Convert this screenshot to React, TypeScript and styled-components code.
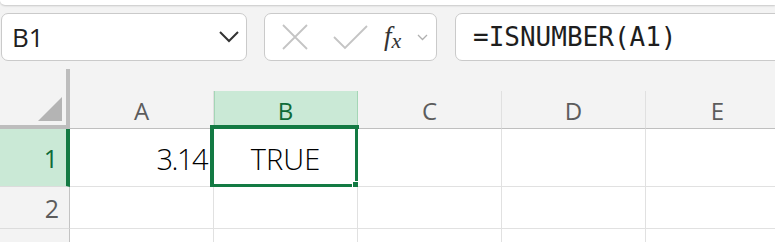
import React from "react";
import styled, { createGlobalStyle } from "styled-components";

const Global = createGlobalStyle`
  html, body { margin: 0; padding: 0; background: #f3f3f3; overflow: hidden; }
  body { width: 775px; height: 242px; font-family: "Open Sans", "Noto Sans", sans-serif; }
`;

const Page = styled.div`
  display: flex;
  flex-direction: column;
  width: 775px;
  height: 242px;
  overflow: hidden;
  & > * { flex-shrink: 0; }
`;

const RibbonEdge = styled.div`
  height: 5px;
  background: #ffffff;
  border-bottom-left-radius: 8px;
  box-shadow: 0 1px 2px rgba(0, 0, 0, 0.18);
`;

const FormulaBar = styled.div`
  display: flex;
  align-items: stretch;
  height: 48px;
  margin-top: 8px;
  padding-left: 1px;
`;

const Box = styled.div`
  box-sizing: border-box;
  display: flex;
  align-items: center;
  background: #ffffff;
  border: 1.5px solid #cacaca;
  border-radius: 7px;
`;

const NameBox = styled(Box)`
  width: 246px;
  justify-content: space-between;
  padding: 0 6px 0 10px;
  font-size: 26px;
  color: #202020;
`;

const FxBox = styled(Box)`
  width: 173px;
  margin-left: 17px;
  padding-left: 17px;
`;

const FormulaBox = styled(Box)`
  flex: 1;
  margin-left: 18px;
  margin-right: -20px;
  padding-left: 17px;
  font-family: "DejaVu Sans Mono", "Liberation Mono", monospace;
  font-size: 26px;
  color: #1e1e1e;
`;

const IconSlot = styled.span<{ $w: number }>`
  display: inline-flex;
  width: ${(p) => p.$w}px;
  align-items: center;
`;

const FxText = styled.span`
  font-family: "Liberation Serif", "DejaVu Serif", serif;
  font-style: italic;
  font-size: 27px;
  color: #333;
  line-height: 1;
  sub {
    font-size: 22px;
    vertical-align: -3px;
  }
`;

const Sheet = styled.div`
  position: relative;
  margin-top: 8px;
  display: grid;
  grid-template-columns: 70px repeat(5, 144px);
  grid-template-rows: 22px 38px 58px 42px 42px;
`;

const Corner = styled.div`
  grid-row: 1 / span 2;
  grid-column: 1;
  box-sizing: border-box;
  border-right: 4px solid #bdbdbd;
  border-bottom: 4px solid #bdbdbd;
  display: flex;
  align-items: flex-end;
  justify-content: flex-end;
  padding: 0 4px 4px 0;
`;

const TopSpacer = styled.div`
  grid-row: 1;
  grid-column: 2 / -1;
`;

const ColHeader = styled.div<{ $active?: boolean }>`
  box-sizing: border-box;
  display: flex;
  align-items: center;
  justify-content: center;
  font-size: 24px;
  color: ${(p) => (p.$active ? "#0f6b38" : "#5c5c5c")};
  background: ${(p) => (p.$active ? "#cae9d6" : "#f3f3f3")};
  border-right: 1px solid ${(p) => (p.$active ? "#a4d6b6" : "#e0e0e0")};
  border-bottom: 1px solid #bfbfbf;
  box-shadow: ${(p) => (p.$active ? "inset 1px 0 0 #a4d6b6" : "none")};
  padding-top: 1px;
`;

const RowHeader = styled.div<{ $active?: boolean }>`
  box-sizing: border-box;
  display: flex;
  align-items: center;
  justify-content: flex-end;
  padding-right: ${(p) => (p.$active ? "8px" : "10px")};
  font-size: 25px;
  color: ${(p) => (p.$active ? "#0f6b38" : "#5c5c5c")};
  background: ${(p) => (p.$active ? "#cae9d6" : "#f3f3f3")};
  border-right: ${(p) => (p.$active ? "4px solid #137a43" : "1px solid #c3c3c3")};
  border-bottom: 1px solid #dcdcdc;
`;

const Cell = styled.div<{ $align?: "left" | "right" | "center" }>`
  position: relative;
  box-sizing: border-box;
  display: flex;
  align-items: center;
  justify-content: ${(p) =>
    p.$align === "right" ? "flex-end" : p.$align === "center" ? "center" : "flex-start"};
  padding: 2px 6px 0;
  background: #ffffff;
  border-right: 1px solid #e1e1e1;
  border-bottom: 1px solid #e1e1e1;
  font-family: "Open Sans", "Noto Sans", sans-serif;
  font-weight: 300;
  font-size: 29px;
  color: #000;
`;

const Selection = styled.div`
  position: absolute;
  box-sizing: border-box;
  top: -4px;
  left: -4px;
  right: -2px;
  bottom: -2px;
  border: 4px solid #137a43;
  pointer-events: none;
`;

const FillHandle = styled.div`
  position: absolute;
  right: -7px;
  bottom: -7px;
  width: 8px;
  height: 8px;
  background: #137a43;
  border: 1px solid #ffffff;
`;

const Num = styled.span`
  letter-spacing: -1.5px;
`;

const cols = ["A", "B", "C", "D", "E"];

export default function App() {
  return (
    <Page>
      <Global />
      <RibbonEdge />
      <FormulaBar>
        <NameBox>
          <span>B1</span>
          <svg width="22" height="14" viewBox="0 0 22 14">
            <path d="M2 2 L11 11 L20 2" fill="none" stroke="#333" strokeWidth="2" />
          </svg>
        </NameBox>
        <FxBox>
          <IconSlot $w={51}>
            <svg width="26" height="26" viewBox="0 0 26 26">
              <path d="M1 1 L25 25 M25 1 L1 25" stroke="#c4c4c4" strokeWidth="1.8" fill="none" />
            </svg>
          </IconSlot>
          <IconSlot $w={51}>
            <svg width="35" height="25" viewBox="0 0 35 25">
              <path d="M1 12 L12 23 L34 1" stroke="#c4c4c4" strokeWidth="1.8" fill="none" />
            </svg>
          </IconSlot>
          <IconSlot $w={33}>
            <FxText>
              f<sub>x</sub>
            </FxText>
          </IconSlot>
          <svg width="11" height="7" viewBox="0 0 11 7">
            <path d="M1 1 L5.5 5.5 L10 1" stroke="#b0b0b0" strokeWidth="1.3" fill="none" />
          </svg>
        </FxBox>
        <FormulaBox>=ISNUMBER(A1)</FormulaBox>
      </FormulaBar>
      <Sheet>
        <Corner>
          <svg width="24" height="24" viewBox="0 0 24 24">
            <path d="M24 0 L24 24 L0 24 Z" fill="#b4b4b4" />
          </svg>
        </Corner>
        <TopSpacer />
        {cols.map((c) => (
          <ColHeader key={c} $active={c === "B"}>
            {c}
          </ColHeader>
        ))}
        <RowHeader $active>1</RowHeader>
        <Cell $align="right">
          <Num>3.14</Num>
        </Cell>
        <Cell $align="center">
          TRUE
          <Selection>
            <FillHandle />
          </Selection>
        </Cell>
        <Cell />
        <Cell />
        <Cell />
        {[2, 3].map((r) => (
          <React.Fragment key={r}>
            <RowHeader>{r}</RowHeader>
            {cols.map((c) => (
              <Cell key={c} />
            ))}
          </React.Fragment>
        ))}
      </Sheet>
    </Page>
  );
}
